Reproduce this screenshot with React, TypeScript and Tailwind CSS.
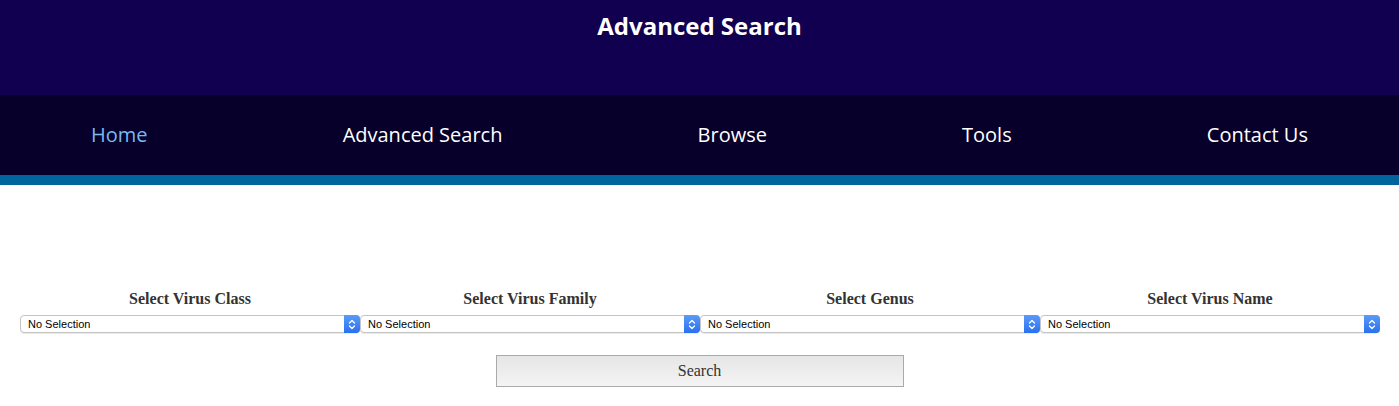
const NAV = ['Home', 'Advanced Search', 'Browse', 'Tools', 'Contact Us'];
const FIELDS = ['Select Virus Class', 'Select Virus Family', 'Select Genus', 'Select Virus Name'];

function SelectBox() {
  return (
    <div className="flex h-[18px] w-[340px] items-stretch rounded-[4px] border border-[#c4c4c4] bg-white shadow-[0_1px_0_rgba(0,0,0,0.08)]">
      <div className="flex flex-1 items-center pl-[7px] font-['Liberation_Sans',Arial,sans-serif] text-[11px] leading-none text-black">
        No Selection
      </div>
      <div className="-my-px -mr-px flex w-[16px] items-center justify-center rounded-r-[4px] bg-gradient-to-b from-[#5a9bf8] to-[#2a6ff0]">
        <svg width="8" height="11" viewBox="0 0 8 11" fill="none">
          <path d="M1.5 4 L4 1.5 L6.5 4" stroke="#fff" strokeWidth="1.3" strokeLinecap="round" strokeLinejoin="round" />
          <path d="M1.5 7 L4 9.5 L6.5 7" stroke="#fff" strokeWidth="1.3" strokeLinecap="round" strokeLinejoin="round" />
        </svg>
      </div>
    </div>
  );
}

export default function App() {
  return (
    <div className="min-h-screen bg-white font-['Open_Sans',sans-serif]">
      <header className="h-[95px] bg-[#11004f] pt-[9px] text-center">
        <h1 className="text-[24px] font-bold leading-[34px] text-white">Advanced Search</h1>
      </header>
      <nav className="flex h-[80px] items-center justify-between bg-[#07002a] px-[91px]">
        {NAV.map((item, i) => (
          <a
            key={item}
            className={i === 0 ? 'text-[20px] text-[#7ab8f0]' : 'text-[20px] text-white'}
          >
            {item}
          </a>
        ))}
      </nav>
      <div className="h-[10px] bg-[#00659c]" />
      <main className="px-[20px] pt-[105px]">
        <div className="flex">
          {FIELDS.map((label) => (
            <div key={label} className="flex w-[340px] flex-col items-center">
              <label className="mb-[8px] font-['Liberation_Serif','Times_New_Roman',serif] text-[16px] font-bold leading-[17px] text-[#333]">
                {label}
              </label>
              <SelectBox />
            </div>
          ))}
        </div>
        <div className="mt-[22px] flex justify-center">
          <button className="h-[32px] w-[408px] border border-[#aaa] bg-gradient-to-b from-[#e6e6e6] to-[#f4f4f4] font-['Liberation_Serif','Times_New_Roman',serif] text-[16px] text-[#333]">
            Search
          </button>
        </div>
      </main>
    </div>
  );
}
